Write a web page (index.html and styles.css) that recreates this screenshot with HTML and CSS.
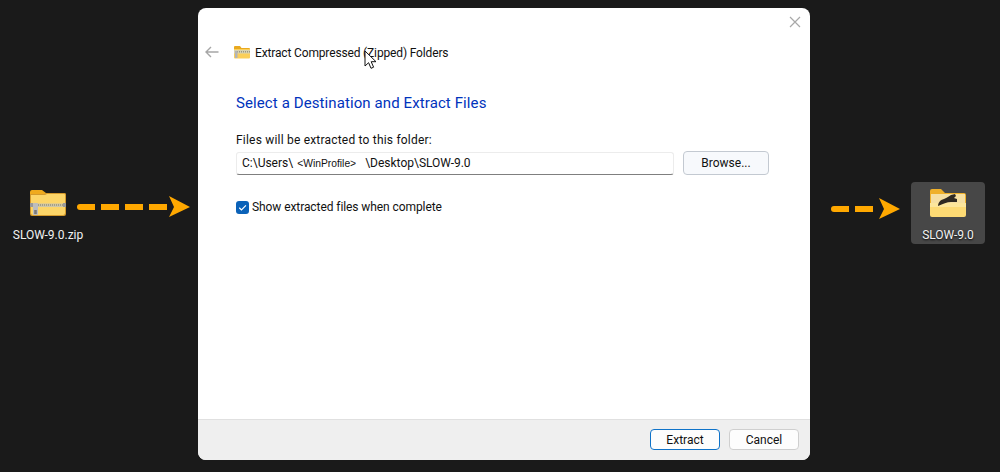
FILE: index.html
```html
<!DOCTYPE html>
<html lang="en">
<head>
<meta charset="utf-8">
<title>Extract Compressed (Zipped) Folders</title>
<link rel="stylesheet" href="styles.css">
</head>
<body>
<div class="stage">
  <section class="side side-left">
    <div class="file">
      <svg class="icon-big" viewBox="0 0 36 28" aria-hidden="true">
        <path d="M0 3a2 2 0 0 1 2-2h10l4 3h18a2 2 0 0 1 2 2v5H0z" fill="#efaa1d"/>
        <path d="M0 5h14l2-1h18a2 2 0 0 1 2 2v19a2 2 0 0 1-2 2H2a2 2 0 0 1-2-2z" fill="#d49a2c"/>
        <path d="M1 6h14l2-1h17a1 1 0 0 1 1 1v18a2 2 0 0 1-2 2H3a2 2 0 0 1-2-2z" fill="#fcd568"/>
        <rect x="0" y="14.500" width="36" height="3.500" fill="#cdc6a8"/>
        <path d="M6 16h27" stroke="#96927c" stroke-width="1.500" stroke-dasharray="1 1"/>
        <rect x="0" y="14" width="3" height="4" fill="#9a9a9a"/>
        <rect x="33" y="14" width="3" height="4" fill="#9a9a9a"/>
        <rect x="3" y="14" width="5" height="12" rx="1" fill="#bdbdbd"/>
        <rect x="4.200" y="21" width="2.600" height="4" fill="#7a7a7a"/>
      </svg>
      <span class="file-name">SLOW-9.0.zip</span>
    </div>
    <svg class="arrow arrow-long" viewBox="0 0 114 22" aria-hidden="true">
      <path d="M3 11h87" stroke="#ffa800" stroke-width="6" stroke-dasharray="15 6 18 6 18 6 18"/>
      <circle cx="3" cy="11" r="3" fill="#ffa800"/>
      <path d="M92 0l21 11-21 10 5-10z" fill="#ffa800"/>
    </svg>
  </section>

  <main class="dialog">
    <div class="close-row">
      <svg class="close" viewBox="0 0 12 12" aria-hidden="true"><path d="M1 1l10 10M11 1L1 11" stroke="#a8a8a8" stroke-width="1.2"/></svg>
    </div>
    <header class="title-row">
      <svg class="back" viewBox="0 0 14 12" aria-hidden="true"><path d="M13.500 6H1M6 1L1 6l5 5" fill="none" stroke="#a6a6a6" stroke-width="1.4"/></svg>
      <svg class="icon-small" viewBox="0 0 16 14" aria-hidden="true">
        <path d="M0 2a1 1 0 0 1 1-1h5l1.500 2H15a1 1 0 0 1 1 1v2H0z" fill="#e9a91f"/>
        <path d="M0 4h16v8.500a1 1 0 0 1-1 1H1a1 1 0 0 1-1-1z" fill="#fbcf59"/>
        <rect x="0" y="5" width="16" height="3.500" fill="#d9d3b0"/>
        <path d="M3 6.700h13" stroke="#9a9680" stroke-width="1.500" stroke-dasharray="1 1"/>
        <rect x="1" y="6" width="2.500" height="7" fill="#b4b4b4"/>
      </svg>
      <h1 class="title">Extract Compressed (Zipped) Folders</h1>
    </header>
    <div class="content">
      <h2 class="heading">Select a Destination and Extract Files</h2>
      <label class="field-label">Files will be extracted to this folder:</label>
      <div class="path-row">
        <div class="path-input">C:\Users\<span class="profile">&lt;WinProfile&gt;</span>\Desktop\SLOW-9.0</div>
        <button class="btn btn-browse" type="button">Browse...</button>
      </div>
      <div class="check-row">
        <span class="checkbox">
          <svg viewBox="0 0 14 14" aria-hidden="true"><path d="M3.500 7.300l2.400 2.400 4.800-5" fill="none" stroke="#fff" stroke-width="1.300"/></svg>
        </span>
        <span class="check-label">Show extracted files when complete</span>
      </div>
    </div>
    <footer class="footer">
      <button class="btn btn-footer btn-primary" type="button">Extract</button>
      <button class="btn btn-footer" type="button">Cancel</button>
    </footer>
    <svg class="cursor" viewBox="0 0 13 20" aria-hidden="true">
      <path d="M1 1v15l3.600-3.300 2.400 5.600 2.600-1.100-2.400-5.500H12z" fill="#fff" stroke="#111" stroke-width="1"/>
    </svg>
  </main>

  <section class="side side-right">
    <svg class="arrow arrow-short" viewBox="0 0 70 22" aria-hidden="true">
      <path d="M3 11h39" stroke="#ffa800" stroke-width="6" stroke-dasharray="15 6 18"/>
      <circle cx="3" cy="11" r="3" fill="#ffa800"/>
      <path d="M48 0l21 11-21 10 5-10z" fill="#ffa800"/>
    </svg>
    <div class="tile">
      <svg class="icon-big" viewBox="0 0 36 28" aria-hidden="true">
        <path d="M0 2a2 2 0 0 1 2-2h9l4 4h19a2 2 0 0 1 2 2v8H0z" fill="#efb02a"/>
        <path d="M1 5h34v10H1z" fill="#f6dfa2"/>
        <path d="M0 14h36v12a2 2 0 0 1-2 2H2a2 2 0 0 1-2-2z" fill="#fdda74"/>
        <path d="M0 14h36v4H0z" fill="#fde69b"/>
        <path d="M8 17c0-3 2-6 6-7 3-1 5-3 7-4l4-1 1 2-2 2 3 1 0 3-6 0c-4 0-8 2-13 4z" fill="#2f2922"/>
      </svg>
      <span class="file-name shadowed">SLOW-9.0</span>
    </div>
  </section>
</div>
</body>
</html>
```
FILE: styles.css
```css
* { box-sizing: border-box; }
html, body { margin: 0; padding: 0; }
body {
  background: #1a1a1a;
  font-family: Roboto, "Noto Sans", sans-serif;
  font-size: 12px;
  color: #111;
}
.stage { display: flex; width: 1000px; height: 472px; overflow: hidden; }

.side { display: flex; flex: none; }
.side-left { width: 198px; padding: 189px 0 0 21px; gap: 2px; align-items: flex-start; }
.side-right { width: 190px; padding: 174px 0 0 21px; gap: 10px; align-items: flex-start; }

.file { display: flex; flex-direction: column; align-items: center; width: 54px; flex: none; }
.file .icon-big { margin-bottom: 10px; }
.icon-big { width: 36px; height: 28px; display: block; flex: none; }
.file-name { color: #f2f2f2; font-size: 12px; line-height: 16px; white-space: nowrap; }
.shadowed { text-shadow: 0 1px 2px #000; }

.arrow { display: block; flex: none; }
.arrow-long { width: 114px; height: 22px; margin-top: 7px; }
.arrow-short { width: 70px; height: 22px; margin-top: 24px; }

.tile {
  width: 74px; height: 62px; margin-top: 8px;
  background: #474747; border-radius: 4px;
  display: flex; flex-direction: column; align-items: center;
  padding-top: 7px;
}
.tile .icon-big { margin-bottom: 10px; }

.dialog {
  position: relative;
  flex: none; width: 612px; height: 452px; margin-top: 8px;
  background: #fff; border-radius: 8px; overflow: hidden;
  display: flex; flex-direction: column;
}
.close-row { display: flex; justify-content: flex-end; padding: 8px 9px 0 0; height: 30px; }
.close { width: 12px; height: 12px; display: block; }

.title-row { display: flex; align-items: center; height: 28px; padding-left: 7px; }
.back { width: 14px; height: 12px; flex: none; }
.icon-small { width: 16px; height: 14px; flex: none; margin-left: 15px; }
.title { margin: 2px 0 0 5px; font-size: 12px; font-weight: 400; line-height: 16px; color: #111; letter-spacing: -0.15px; }

.content { flex: 1; padding: 27px 41px 0 38px; }
.heading { margin: 0 0 19px; font-size: 15px; font-weight: 400; line-height: 20px; color: #0033bc; letter-spacing: 0.1px; }
.field-label { display: block; line-height: 16px; margin-bottom: 3px; letter-spacing: 0.2px; }
.path-row { display: flex; gap: 9px; align-items: stretch; height: 24px; }
.path-input {
  width: 438px; height: 23px; margin-top: 1px; padding: 2px 5px;
  border: 1px solid #ececec; border-bottom: 1px solid #7f7f7f; border-radius: 3px;
  line-height: 16px; white-space: nowrap;
}
.profile { font-family: "Liberation Sans", sans-serif; font-size: 10.300px; margin: 0 9px 0 4px; }

.btn {
  font: inherit; color: #111; padding: 0; cursor: default;
  border: 1px solid #c3c9d1; border-radius: 4px; background: #f7f9fc;
}
.btn-browse { width: 86px; }

.check-row { display: flex; align-items: center; gap: 3px; margin-top: 24px; line-height: 16px; }
.check-label { letter-spacing: -0.08px; }
.checkbox { width: 13px; height: 13px; border-radius: 3px; background: #0b62b8; display: block; flex: none; }
.checkbox svg { display: block; width: 13px; height: 13px; }

.footer {
  flex: none; height: 41px; background: #efefef; border-top: 1px solid #e0e0e0;
  display: flex; justify-content: flex-end; gap: 9px; padding: 9px 11px 0 0;
}
.btn-footer { width: 70px; height: 21px; background: #fdfdfd; border-color: #cfcfcf; }
.btn-primary { border-color: #0f73c9; }

.cursor { position: absolute; left: 166px; top: 42px; width: 13px; height: 20px; }
```
